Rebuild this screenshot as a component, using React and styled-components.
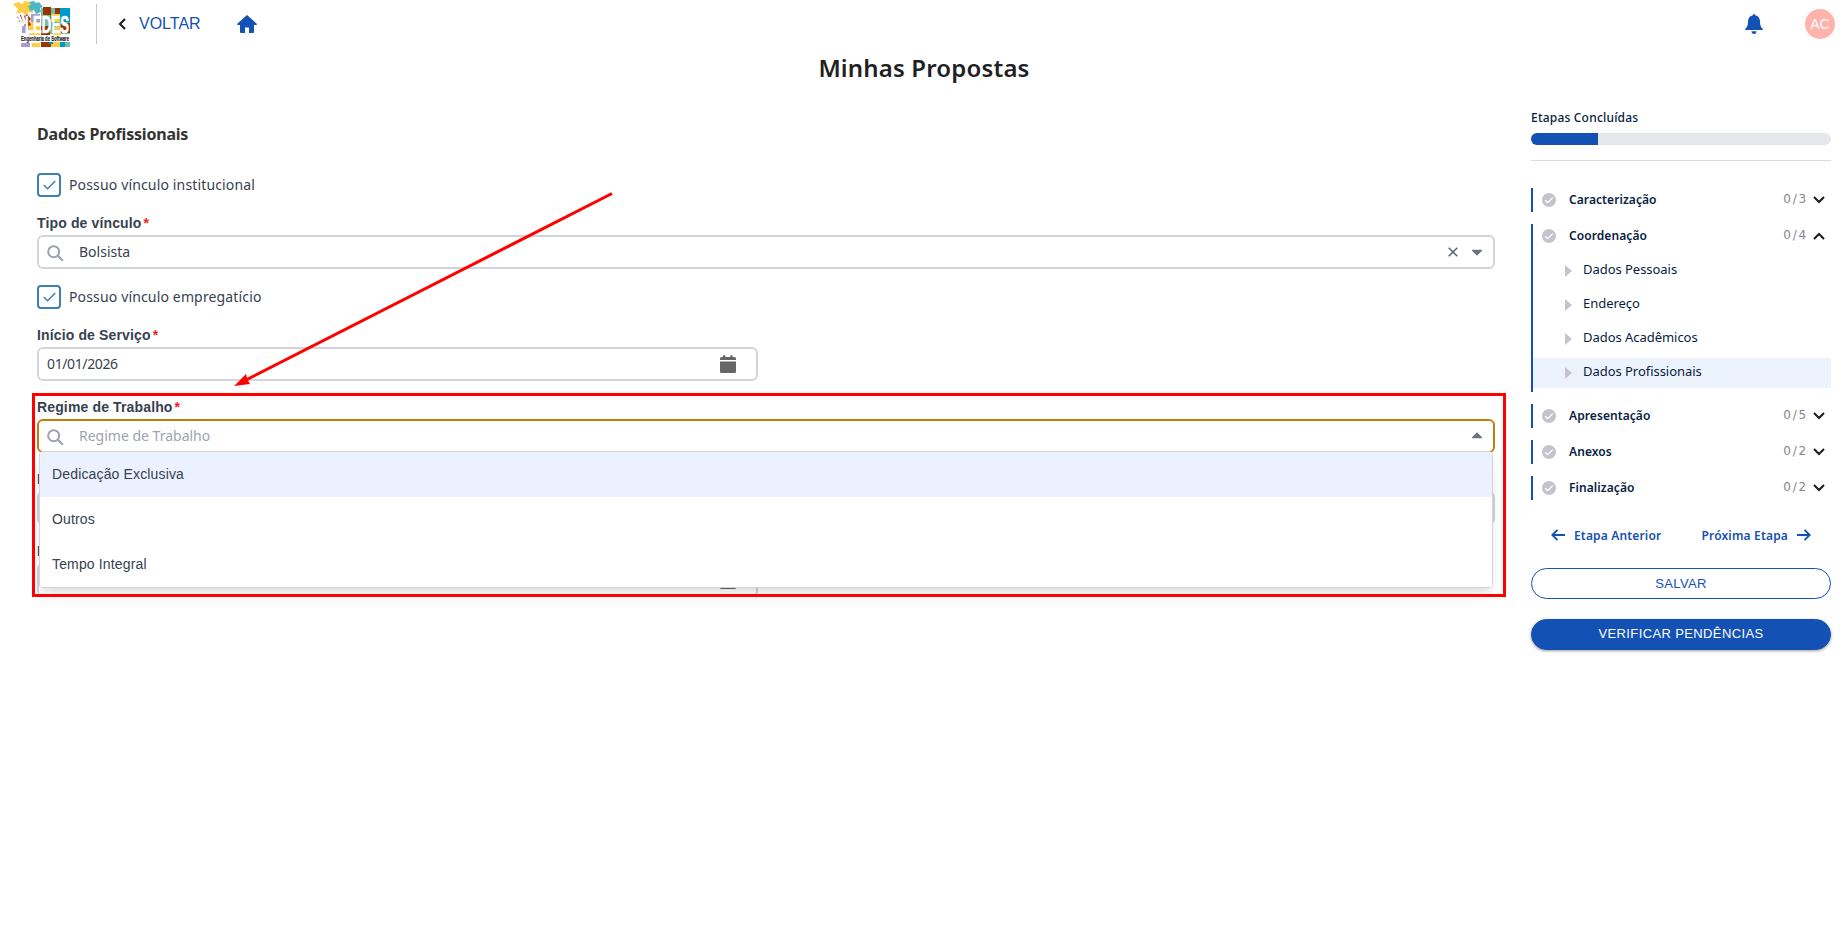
import React from "react";
import styled, { createGlobalStyle } from "styled-components";

const GlobalStyle = createGlobalStyle`
  * { box-sizing: border-box; }
  body { margin: 0; background: #fff; font-family: "Noto Sans", sans-serif; color: #374151; }
  button { font: inherit; }
`;

const arial = '"Liberation Sans", Arial, sans-serif';
const blue = "#1351b4";

const Page = styled.div`
  position: relative;
  width: 1848px;
  height: 930px;
  overflow: hidden;
  background: #fff;
`;

const Header = styled.header`
  display: flex;
  align-items: center;
  height: 48px;
  padding: 0 13px 0 12px;
`;

const Divider = styled.div`
  width: 1px;
  height: 40px;
  margin: 0 21px 0 25px;
  background: #c8c8c8;
`;

const BackLink = styled.a`
  display: flex;
  align-items: center;
  gap: 13px;
  width: 119px;
  font: 16px ${arial};
  color: ${blue};
`;

const HeaderIcon = styled.svg`
  display: block;
  flex: none;
  fill: ${blue};
`;

const Avatar = styled.div`
  display: grid;
  place-items: center;
  width: 30px;
  height: 30px;
  margin-left: 42px;
  border-radius: 50%;
  background: #ffb3ab;
  color: #fff;
  font: 14px ${arial};
`;

const Spacer = styled.div`
  flex: 1;
`;

const Title = styled.h1`
  margin: 0;
  height: 40px;
  line-height: 40px;
  text-align: center;
  font-size: 24px;
  font-weight: 600;
  letter-spacing: 0.16px;
  color: #1f1f24;
`;

const Columns = styled.div`
  display: flex;
  gap: 36px;
  padding: 20px 17px 0 37px;
`;

const Form = styled.main`
  flex: none;
  width: 1458px;
  padding-top: 14px;
`;

const SectionTitle = styled.h2`
  margin: 0 0 27px;
  height: 24px;
  line-height: 24px;
  font-size: 16px;
  font-weight: 700;
  letter-spacing: -0.2px;
  color: #333;
`;

const CheckRow = styled.label`
  display: flex;
  align-items: center;
  gap: 8px;
  height: 24px;
  margin-bottom: 16px;
  font-size: 14px;
  letter-spacing: 0.15px;
  color: #374151;
`;

const CheckText = styled.span`
  padding-bottom: 2px;
`;

const CheckBox = styled.span`
  display: grid;
  place-items: center;
  width: 24px;
  height: 24px;
  border: 2px solid #3f7fb1;
  border-radius: 4px;
`;

const Field = styled.div`
  width: ${(p) => (p.$half ? "721px" : "100%")};
  height: 56px;
  margin-bottom: 16px;
`;

const FieldLabel = styled.div`
  height: 22px;
  padding-top: 1px;
  font: bold 14px/18px ${arial};
  letter-spacing: 0.14px;
  color: #374151;
  white-space: nowrap;
`;

const Required = styled.span`
  margin-left: 2px;
  color: #f01e1e;
`;

const InputBox = styled.div`
  display: flex;
  align-items: center;
  height: 34px;
  padding: 0 ${(p) => (p.$half ? "20px" : "10px")} 0 8px;
  border: 2px solid ${(p) => (p.$open ? "#c27d0e" : "#d1d5db")};
  border-radius: 6px;
  background: #fff;
`;

const InputText = styled.span`
  flex: 1;
  margin-left: ${(p) => (p.$icon ? "15px" : "0")};
  font-size: 14px;
  line-height: 20px;
  letter-spacing: ${(p) => (p.$date ? "-0.38px" : "0")};
  color: ${(p) => (p.$placeholder ? "#9ca3af" : "#374151")};
`;

const ClearIcon = styled.svg`
  margin: -1px 13px 0 0;
`;

const OpenField = styled.div`
  position: relative;
`;

const Menu = styled.ul`
  position: absolute;
  z-index: 2;
  top: 54px;
  left: 2px;
  width: 1454px;
  height: 137px;
  margin: 0;
  padding: 0;
  overflow: hidden;
  list-style: none;
  background: #fff;
  border: 1px solid #d1d5db;
  border-radius: 4px;
  box-shadow: 0 10px 15px -3px rgba(0, 0, 0, 0.1), 0 4px 6px -2px rgba(0, 0, 0, 0.05);
`;

const Option = styled.li`
  height: 45px;
  padding-left: 12px;
  font: 14px/45px ${arial};
  letter-spacing: 0.15px;
  color: #374151;
  background: ${(p) => (p.$active ? "#ebf1fe" : "#fff")};
`;

const Sidebar = styled.aside`
  flex: none;
  width: 300px;
`;

const ProgressTitle = styled.div`
  height: 25px;
  line-height: 19px;
  font-size: 12px;
  font-weight: 500;
  color: #071d41;
  letter-spacing: 0.2px;
`;

const Progress = styled.div`
  height: 12px;
  overflow: hidden;
  border-radius: 6px;
  background: #e5e7eb;
`;

const ProgressFill = styled.div`
  width: 67px;
  height: 12px;
  background: ${blue};
`;

const Rule = styled.div`
  height: 1px;
  margin: 15px 0 27px;
  background: #dcdcdc;
`;

const Steps = styled.div`
  display: flex;
  flex-direction: column;
  gap: 12px;
`;

const Step = styled.div`
  border-left: 2px solid ${blue};
`;

const StepHead = styled.div`
  display: flex;
  align-items: center;
  height: 24px;
  padding: 0 6px 0 9px;
`;

const StepName = styled.span`
  flex: 1;
  margin-left: 13px;
  font-size: 12px;
  line-height: 18px;
  font-weight: 600;
  letter-spacing: 0.08px;
  color: #071d41;
`;

const StepCount = styled.span`
  margin: -3px 5px 0 0;
  font: 12px "DejaVu Sans", sans-serif;
  letter-spacing: 1.8px;
  color: #85858f;
`;

const SubSteps = styled.div`
  display: flex;
  flex-direction: column;
  gap: 4px;
  padding: 8px 0 4px;
`;

const SubStep = styled.div`
  display: flex;
  align-items: center;
  gap: 11px;
  height: 30px;
  padding-left: 32px;
  font-size: 13px;
  letter-spacing: -0.04px;
  color: #071d41;
  background: ${(p) => (p.$active ? "#ecf3fc" : "transparent")};

  svg { margin-top: 0; }
  span { margin-top: -4px; }
`;

const StepNav = styled.nav`
  display: flex;
  align-items: center;
  justify-content: space-between;
  height: 20px;
  margin: 25px 20px 23px;
`;

const NavLink = styled.a`
  display: flex;
  align-items: center;
  gap: 9px;
  font-size: 12px;
  font-weight: 600;
  letter-spacing: 0.16px;
  color: ${blue};
`;

const Action = styled.button`
  display: block;
  width: 300px;
  height: 31px;
  margin: 0 0 20px;
  padding: 0 0 ${(p) => (p.$primary ? "2px" : "0")};
  border: 1px solid ${blue};
  border-radius: 16px;
  background: ${(p) => (p.$primary ? blue : "#fff")};
  color: ${(p) => (p.$primary ? "#fff" : blue)};
  font: 13px ${arial};
  letter-spacing: 0.38px;
  box-shadow: ${(p) => (p.$primary ? "0 1px 3px rgba(0,0,0,.4)" : "none")};
`;

const Annotation = styled.svg`
  position: absolute;
  z-index: 3;
  inset: 0;
  pointer-events: none;
`;

const LogoArt = styled.svg`
  display: block;
  flex: none;
  overflow: visible;
`;

const Logo = () => (
  <LogoArt width="59" height="48" viewBox="12 0 59 48">
    <path d="M41 8h29v26H41z" fill="#75bda7" />
    <path d="M43 7h8v8h-8zM55 8h6v6h-6zM61 23h9v10h-9zM41 26h9v9h-9z" fill="#993300" />
    <path d="M60 8h10v14H60zM50 15h6v12h-6z" fill="#0099cc" />
    <path d="M51 14h9v8h-9zM53 27h8v8h-8z" fill="#ffcc44" />
    <path d="M22 17h7v16h-7zM31 14h9v8h-9z" fill="#a79dcd" />
    <path d="M29 22h11v13H29z" fill="#ffcc44" />
    <path d="M13 4l6-2 2 2 3-1-1-2 9 1 1 11-5-1-1 3-4-1 1-2-8 2 2-5-2-2z" fill="#ffcc44" />
    <path d="M29 2l5-1 2 2 3-1 4 5-3 1 1 4-5 2-2-4-4 1-2-5 3-1z" fill="#4bb9c4" />
    <path d="M17 17l5-3 3 2 2-2 4 5-2 2 2 4-5 2-2-3-3 1-3-4 2-1z" fill="#993300" />
    <text x="25" y="32.500" fontFamily="Liberation Sans" fontWeight="700" fontSize="23" fill="#fff" stroke="#fff" strokeWidth=".7" textLength="44" lengthAdjust="spacingAndGlyphs">LEDES</text>
    <path d="M16 20l5 5M18 14l5 11M22 14l3 9" stroke="#fff" strokeWidth="2.600" strokeLinecap="round" />
    <path d="M20 35h50v7H20z" fill="#fff" />
    <text x="21" y="40.800" fontFamily="Liberation Sans" fontWeight="700" fontSize="6.500" fill="#222" stroke="#222" strokeWidth=".15" textLength="48" lengthAdjust="spacingAndGlyphs">Engenharia de Software</text>
    <path d="M21 43h9v4h-9z" fill="#a79dcd" />
    <path d="M32 43h8v4h-8zM51 42h9v5h-9z" fill="#ffcc44" />
    <path d="M41 42h10v5H41z" fill="#993300" />
    <path d="M49 42h4v2h-4zM60 42h5v5h-5z" fill="#0099cc" />
    <path d="M65 42h5v5h-5z" fill="#75bda7" />
  </LogoArt>
);

const SearchGlyph = styled.svg`
  margin-top: 2px;
`;

const SearchIcon = () => (
  <SearchGlyph width="17" height="17" viewBox="0 0 17 17" fill="none" stroke="#9ca3af" strokeWidth="2">
    <circle cx="6.700" cy="6.700" r="5.500" />
    <path d="M10.800 10.800l5 5" strokeWidth="2.300" />
  </SearchGlyph>
);

const CaretGlyph = styled.svg`
  margin-top: ${(p) => (p.$up ? "-1px" : "0")};
`;

const Caret = ({ up }) => (
  <CaretGlyph $up={up} width="12" height="7" viewBox="0 0 12 7" fill="#6b7280">
    {up ? <path d="M1 5.200L6 .2l5 5q.5 1.100-.6 1.100H1.600Q.5 6.300 1 5.200z" /> : <path d="M1 1.800L6 6.800l5-5Q11.500.7 10.400.7H1.600Q.5.7 1 1.800z" />}
  </CaretGlyph>
);

const CalendarIcon = () => (
  <svg width="16" height="18" viewBox="0 0 16 18" fill="#666">
    <path d="M0 5V3.500Q0 2 1.500 2H3V1q0-1 1.200-1T5.300 1v1h5V1q0-1 1.200-1T12.500 1v1h2Q16 2 16 3.500V5z" />
    <path d="M0 6.500h16v10q0 1.500-1.500 1.500h-13Q0 18 0 16.500z" />
  </svg>
);

const Check = ({ children }) => (
  <CheckRow>
    <CheckBox>
      <svg width="13" height="10" viewBox="0 0 13 10" fill="none" stroke="#3f7fb1" strokeWidth="1.500"><path d="M.8 5l3.700 3.700L12.200 1" /></svg>
    </CheckBox>
    <CheckText>{children}</CheckText>
  </CheckRow>
);

const Label = ({ children }) => (
  <FieldLabel>{children}<Required>*</Required></FieldLabel>
);

const DateField = ({ label, value }) => (
  <Field $half>
    <Label>{label}</Label>
    <InputBox $half><InputText $date>{value}</InputText><CalendarIcon /></InputBox>
  </Field>
);

const StepRow = ({ name, count, open, children }) => (
  <Step>
    <StepHead>
      <svg width="14" height="14" viewBox="0 0 14 14" fill="none"><circle cx="7" cy="7" r="7" fill="#c5c4ce" /><path d="M3.200 7.200l2.500 2.500 5-5" stroke="#fff" strokeWidth="1.300" /></svg>
      <StepName>{name}</StepName>
      <StepCount>{count}</StepCount>
      <svg width="12" height="8" viewBox="0 0 12 8" fill="none" stroke="#1b1b1f" strokeWidth="2"><path d={open ? "M1 7l5-5 5 5" : "M1 1l5 5 5-5"} /></svg>
    </StepHead>
    {children}
  </Step>
);

const subSteps = ["Dados Pessoais", "Endereço", "Dados Acadêmicos", "Dados Profissionais"];

export default function App() {
  return (
    <Page>
      <GlobalStyle />
      <Header>
        <Logo />
        <Divider />
        <BackLink>
          <svg width="8" height="12" viewBox="0 0 8 12" fill="none" stroke="#1b1b1f" strokeWidth="2"><path d="M7 1L2 6l5 5" /></svg>
          VOLTAR
        </BackLink>
        <HeaderIcon width="20" height="18" viewBox="0 0 20 18"><path d="M10 0l10 9-.5 1H17v7q0 1-1 1h-4v-5.500H8V18H4q-1 0-1-1v-7H.5L0 9z" /></HeaderIcon>
        <Spacer />
        <HeaderIcon width="18" height="20" viewBox="0 0 18 20"><path d="M8 1.200Q8 0 9 0t1 1.200c3 .5 5 3 5 6 0 4 .8 6 2.600 7.500Q18.500 16 17 16H1Q-.5 16 .4 14.700C2.200 13.200 3 11.200 3 7.200c0-3 2-5.500 5-6zM6.500 17.300h5Q11.300 20 9 20t-2.500-2.700z" /></HeaderIcon>
        <Avatar>AC</Avatar>
      </Header>
      <Title>Minhas Propostas</Title>
      <Columns>
        <Form>
          <SectionTitle>Dados Profissionais</SectionTitle>
          <Check>Possuo vínculo institucional</Check>
          <Field>
            <Label>Tipo de vínculo</Label>
            <InputBox>
              <SearchIcon /><InputText $icon>Bolsista</InputText>
              <ClearIcon width="10" height="10" viewBox="0 0 10 10" stroke="#5b6472" strokeWidth="1.500"><path d="M.7.7l8.600 8.600M9.300.7L.7 9.300" /></ClearIcon>
              <Caret />
            </InputBox>
          </Field>
          <Check>Possuo vínculo empregatício</Check>
          <DateField label="Início de Serviço" value="01/01/2026" />
          <OpenField>
            <Field>
              <Label>Regime de Trabalho</Label>
              <InputBox $open><SearchIcon /><InputText $icon $placeholder>Regime de Trabalho</InputText><Caret up /></InputBox>
            </Field>
            <Menu>
              <Option $active>Dedicação Exclusiva</Option>
              <Option>Outros</Option>
              <Option>Tempo Integral</Option>
            </Menu>
          </OpenField>
          <Field><FieldLabel>I</FieldLabel><InputBox /></Field>
          <Field $half><FieldLabel>I</FieldLabel><InputBox $half><InputText /><CalendarIcon /></InputBox></Field>
        </Form>
        <Sidebar>
          <ProgressTitle>Etapas Concluídas</ProgressTitle>
          <Progress><ProgressFill /></Progress>
          <Rule />
          <Steps>
            <StepRow name="Caracterização" count="0/3" />
            <StepRow name="Coordenação" count="0/4" open>
              <SubSteps>
                {subSteps.map((s) => (
                  <SubStep key={s} $active={s === "Dados Profissionais"}>
                    <svg width="7" height="12" viewBox="0 0 7 12" fill="#c5c4ce"><path d="M0 0l7 6-7 6z" /></svg>
                    <span>{s}</span>
                  </SubStep>
                ))}
              </SubSteps>
            </StepRow>
            <StepRow name="Apresentação" count="0/5" />
            <StepRow name="Anexos" count="0/2" />
            <StepRow name="Finalização" count="0/2" />
          </Steps>
          <StepNav>
            <NavLink>
              <svg width="14" height="12" viewBox="0 0 14 12" fill="none" stroke={blue} strokeWidth="1.900"><path d="M14 6H1.500M6.500.8L1.300 6l5.200 5.200" /></svg>
              Etapa Anterior
            </NavLink>
            <NavLink>
              Próxima Etapa
              <svg width="14" height="12" viewBox="0 0 14 12" fill="none" stroke={blue} strokeWidth="1.900"><path d="M0 6h12.500M7.500.8L12.700 6l-5.200 5.200" /></svg>
            </NavLink>
          </StepNav>
          <Action>SALVAR</Action>
          <Action $primary>VERIFICAR PENDÊNCIAS</Action>
        </Sidebar>
      </Columns>
      <Annotation width="1848" height="930" viewBox="0 0 1848 930">
        <path d="M33.500 394.500H1504.500V595.500H33.500z" fill="none" stroke="#f00" strokeWidth="3" />
        <path d="M612 193.500L244 381" stroke="#f00" strokeWidth="3" />
        <path d="M234 386l12-12 1.500 5.500 2.500 4.500z" fill="#f00" />
      </Annotation>
    </Page>
  );
}
